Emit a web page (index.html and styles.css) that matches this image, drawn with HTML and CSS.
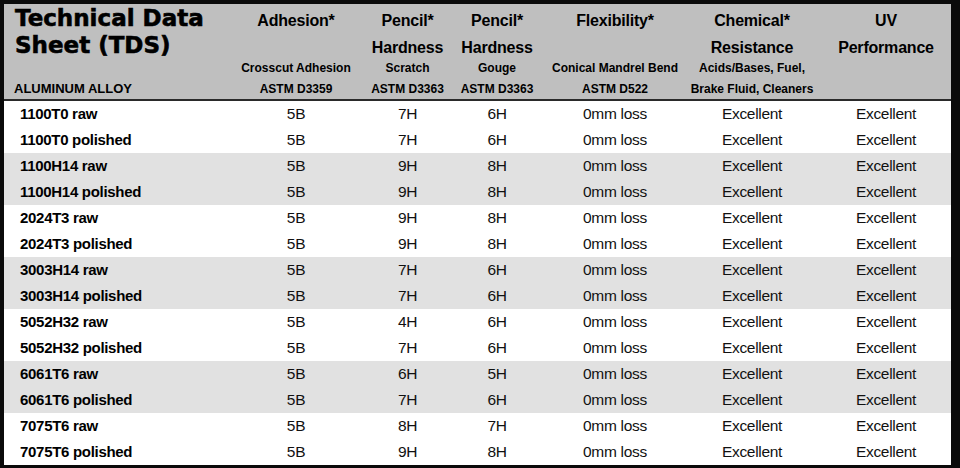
FILE: index.html
```html
<!DOCTYPE html>
<html lang="en">
<head>
<meta charset="utf-8">
<title>Technical Data Sheet (TDS)</title>
<link rel="stylesheet" href="styles.css">
</head>
<body>
<div class="sheet">
  <div class="head">
    <div class="hcell first">
      <div class="title">Technical Data<br>Sheet (TDS)</div>
      <div class="alloy">ALUMINUM ALLOY</div>
    </div>
    <div class="hcell">
      <div class="h">Adhesion*</div><div class="h"></div>
      <div class="subs"><div class="s">Crosscut Adhesion</div><div class="s">ASTM D3359</div></div>
    </div>
    <div class="hcell">
      <div class="h">Pencil*</div><div class="h">Hardness</div>
      <div class="subs"><div class="s">Scratch</div><div class="s">ASTM D3363</div></div>
    </div>
    <div class="hcell">
      <div class="h">Pencil*</div><div class="h">Hardness</div>
      <div class="subs"><div class="s">Gouge</div><div class="s">ASTM D3363</div></div>
    </div>
    <div class="hcell">
      <div class="h">Flexibility*</div><div class="h"></div>
      <div class="subs"><div class="s">Conical Mandrel Bend</div><div class="s">ASTM D522</div></div>
    </div>
    <div class="hcell">
      <div class="h">Chemical*</div><div class="h">Resistance</div>
      <div class="subs"><div class="s">Acids/Bases, Fuel,</div><div class="s">Brake Fluid, Cleaners</div></div>
    </div>
    <div class="hcell uv">
      <div class="h">UV</div><div class="h">Performance</div>
      <div class="subs"><div class="s"></div><div class="s"></div></div>
    </div>
  </div>
  <div class="rows">
    <div class="row"><div class="label">1100T0 raw</div><div>5B</div><div>7H</div><div>6H</div><div>0mm loss</div><div>Excellent</div><div class="uv">Excellent</div></div>
    <div class="row"><div class="label">1100T0 polished</div><div>5B</div><div>7H</div><div>6H</div><div>0mm loss</div><div>Excellent</div><div class="uv">Excellent</div></div>
    <div class="row alt"><div class="label">1100H14 raw</div><div>5B</div><div>9H</div><div>8H</div><div>0mm loss</div><div>Excellent</div><div class="uv">Excellent</div></div>
    <div class="row alt"><div class="label">1100H14 polished</div><div>5B</div><div>9H</div><div>8H</div><div>0mm loss</div><div>Excellent</div><div class="uv">Excellent</div></div>
    <div class="row"><div class="label">2024T3 raw</div><div>5B</div><div>9H</div><div>8H</div><div>0mm loss</div><div>Excellent</div><div class="uv">Excellent</div></div>
    <div class="row"><div class="label">2024T3 polished</div><div>5B</div><div>9H</div><div>8H</div><div>0mm loss</div><div>Excellent</div><div class="uv">Excellent</div></div>
    <div class="row alt"><div class="label">3003H14 raw</div><div>5B</div><div>7H</div><div>6H</div><div>0mm loss</div><div>Excellent</div><div class="uv">Excellent</div></div>
    <div class="row alt"><div class="label">3003H14 polished</div><div>5B</div><div>7H</div><div>6H</div><div>0mm loss</div><div>Excellent</div><div class="uv">Excellent</div></div>
    <div class="row"><div class="label">5052H32 raw</div><div>5B</div><div>4H</div><div>6H</div><div>0mm loss</div><div>Excellent</div><div class="uv">Excellent</div></div>
    <div class="row"><div class="label">5052H32 polished</div><div>5B</div><div>7H</div><div>6H</div><div>0mm loss</div><div>Excellent</div><div class="uv">Excellent</div></div>
    <div class="row alt"><div class="label">6061T6 raw</div><div>5B</div><div>6H</div><div>5H</div><div>0mm loss</div><div>Excellent</div><div class="uv">Excellent</div></div>
    <div class="row alt"><div class="label">6061T6 polished</div><div>5B</div><div>7H</div><div>6H</div><div>0mm loss</div><div>Excellent</div><div class="uv">Excellent</div></div>
    <div class="row"><div class="label">7075T6 raw</div><div>5B</div><div>8H</div><div>7H</div><div>0mm loss</div><div>Excellent</div><div class="uv">Excellent</div></div>
    <div class="row"><div class="label">7075T6 polished</div><div>5B</div><div>9H</div><div>8H</div><div>0mm loss</div><div>Excellent</div><div class="uv">Excellent</div></div>
  </div>
</div>
</body>
</html>
```
FILE: styles.css
```css
html, body {
  margin: 0;
  padding: 0;
  background: #ffffff;
}

.sheet {
  width: 947px;
  border-style: solid;
  border-color: #0a0a0a;
  border-width: 4px 9px 3px 4px;
  font-family: "Liberation Sans", Arial, sans-serif;
  color: #111111;
}

.head,
.row {
  display: grid;
  grid-template-columns: 232px 120px 103px 76px 160px 114px 142px;
}

.head {
  height: 95px;
  background: #bfbfbf;
  border-bottom: 2px solid #2a2a2a;
  color: #000000;
}

.hcell {
  display: flex;
  flex-direction: column;
  align-items: center;
  padding-top: 3px;
  white-space: nowrap;
}

.hcell.uv {
  padding-left: 12px;
}

.h {
  height: 27px;
  line-height: 27px;
  font-size: 16px;
  letter-spacing: -0.2px;
  font-weight: bold;
}

.subs {
  margin-top: -3px;
  display: flex;
  flex-direction: column;
  align-items: center;
}

.s {
  height: 20.5px;
  line-height: 20.5px;
  font-size: 12px;
  font-weight: bold;
}

.hcell.first {
  align-items: flex-start;
  padding-top: 1px;
}

.title {
  padding-left: 11px;
  font-family: "DejaVu Sans", "Liberation Sans", sans-serif;
  font-weight: bold;
  font-size: 23px;
  line-height: 27px;
  -webkit-text-stroke: 0.6px #000;
}

.alloy {
  margin-top: auto;
  padding-left: 10px;
  height: 20.5px;
  line-height: 20.5px;
  font-size: 13px;
  font-weight: bold;
}

.row {
  height: 26px;
  line-height: 26px;
  font-size: 15.5px;
  letter-spacing: -0.3px;
  background: #ffffff;
}

.row.alt {
  background: #e1e1e1;
}

.row > div {
  text-align: center;
  white-space: nowrap;
}

.row > .uv {
  padding-left: 12px;
}

.row > .label {
  text-align: left;
  padding-left: 16px;
  font-size: 15px;
  letter-spacing: -0.3px;
  font-weight: bold;
  color: #000000;
}
```
